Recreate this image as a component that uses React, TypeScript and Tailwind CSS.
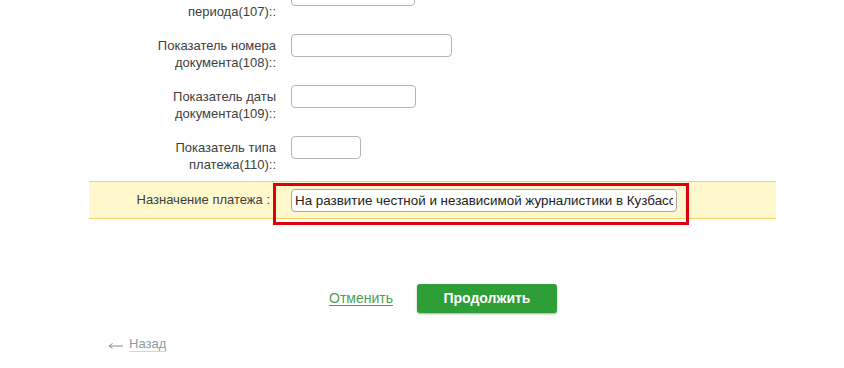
import React from "react";

interface FieldRow {
    top: string;
    bottom: string;
    width: string;
}

// первая строка первого поля уходит за верх экрана, поэтому её не выводим
const rows: FieldRow[] = [
    { top: "", bottom: "периода(107)::", width: "w-[124px]" },
    { top: "Показатель номера", bottom: "документа(108)::", width: "w-[161px]" },
    { top: "Показатель даты", bottom: "документа(109)::", width: "w-[125px]" },
    { top: "Показатель типа", bottom: "платежа(110)::", width: "w-[70px]" },
];

export default function App() {
    return (
        <div className="w-[844px] h-[368px] overflow-hidden bg-white text-[13px] text-[#404040] font-['Liberation_Sans',Arial,sans-serif]">
            <div className="ml-[89px] w-[687px] -mt-[17px]">
                {rows.map((row, index) => (
                    <div key={index} className={`flex items-start ${index === rows.length - 1 ? "mb-[8px]" : "mb-[14px]"}`}>
                        <div className="w-[187px] pt-[3px] text-right leading-[17px]">
                            <div className="h-[17px]">{row.top}</div>
                            <div>{row.bottom}</div>
                        </div>
                        <input
                            type="text"
                            className={`ml-[15px] h-[23px] ${row.width} rounded-[4px] border border-[#b4b4b4] bg-white outline-none`}
                        />
                    </div>
                ))}

                {/* highlighted row */}
                <div className="relative flex h-[38px] items-center border-y border-[#f2d468] bg-[#fef8cc]">
                    <div className="w-[187px] pr-[6px] text-right">Назначение платежа :</div>
                    <input
                        type="text"
                        readOnly
                        value="На развитие честной и независимой журналистики в Кузбассе"
                        className="ml-[15px] h-[23px] w-[386px] rounded-[4px] border border-[#a8a8a8] bg-white px-[3px] text-[13.4px] text-[#222] outline-none"
                    />
                    <div className="pointer-events-none absolute left-[184px] top-[1px] h-[42px] w-[416px] border-[3px] border-[#e0000d]" />
                </div>
            </div>

            <div className="mt-[65px] flex items-center pl-[329px]">
                <a href="#" className="text-[14px] text-[#4f9d55] underline underline-offset-2">Отменить</a>
                <button className="ml-[24px] h-[29px] w-[140px] rounded-[3px] bg-[#2e9e36] text-[14px] font-bold text-white shadow-[0_1px_2px_rgba(0,0,0,0.35)]">
                    Продолжить
                </button>
            </div>

            <div className="mt-[23px] flex items-center pl-[108px]">
                <svg width="15" height="8" viewBox="0 0 15 8" className="mt-[4px]">
                    <path d="M1 4H15M1 4L4.5 1.5M1 4L4.5 6.5" stroke="#8c8c8c" strokeWidth="1" fill="none" />
                </svg>
                <a href="#" className="ml-[6px] border-b border-[#d0d6dc] leading-[15px] text-[#8a9aab]">Назад</a>
            </div>
        </div>
    );
}
